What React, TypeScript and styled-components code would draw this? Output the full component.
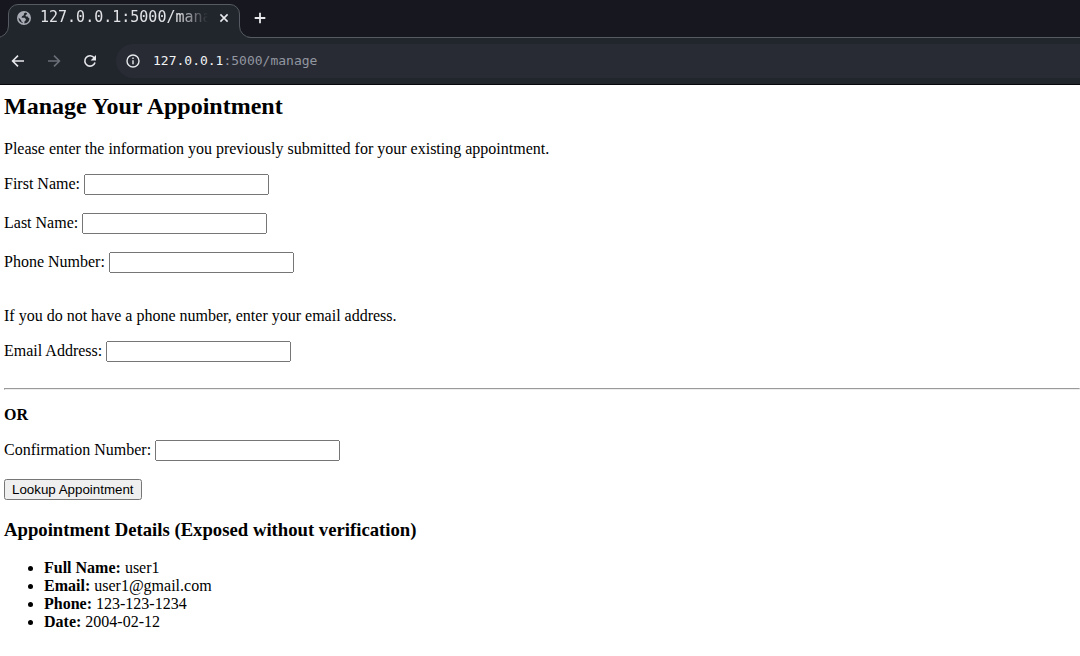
import React from 'react';
import styled, { createGlobalStyle } from 'styled-components';

const GlobalStyle = createGlobalStyle`
  body {
    margin: 0;
    background: #fff;
    color: #000;
    font: 16px/18px "Liberation Serif", "Times New Roman", serif;
  }
`;

const LINE = '#565a62';
const CHROME = '#21252c';

const Chrome = styled.header`
  background: ${CHROME};
  border-bottom: 1px solid #08080c;
  font-family: "DejaVu Sans Mono", monospace;
`;

const TabStrip = styled.div`
  display: flex;
  height: 38px;
  box-sizing: border-box;
  padding: 4px 0 0 8px;
  background: #17181f;
  box-shadow: inset 0 -1px ${LINE};
  overflow: hidden;
`;

const Tab = styled.div`
  position: relative;
  z-index: 0;
  display: flex;
  align-items: center;
  box-sizing: border-box;
  width: 232px;
  height: 34px;
  padding: 0 8px 6px 9px;
`;

const TabShape = styled.svg`
  position: absolute;
  top: 0;
  left: -12px;
  z-index: -1;
`;

const TabTitle = styled.span`
  flex: 1;
  margin: 0 8px 2px 9px;
  overflow: hidden;
  white-space: nowrap;
  color: #e2e3e6;
  font-size: 15px;
  mask-image: linear-gradient(to right, #000 82%, transparent);
`;

const IconButton = styled.button<{ $size?: number }>`
  display: flex;
  align-items: center;
  justify-content: center;
  width: ${(p) => p.$size ?? 36}px;
  height: ${(p) => p.$size ?? 36}px;
  padding: 0;
  border: 0;
  background: none;
  color: #e6e8ec;

  &:disabled {
    color: #6b6f77;
  }
`;

const NewTab = styled(IconButton)`
  margin: 4px 0 0 10px;
`;

const Toolbar = styled.nav`
  display: flex;
  align-items: center;
  padding: 5px 0;
`;

const AddressBar = styled.div`
  display: flex;
  flex: 1;
  align-items: center;
  gap: 13px;
  height: 34px;
  margin-left: 8px;
  padding-left: 10px;
  border-radius: 17px 0 0 17px;
  background: #282b34;
  color: #e6e8ec;
`;

const Url = styled.span`
  color: #9296a0;
  font-size: 13px;
`;

const Host = styled.span`
  color: #f2f3f5;
`;

const Page = styled.main`
  padding: 8px 0 8px 4px;
`;

const Title = styled.h2`
  margin: 0 0 20px;
  font-size: 24px;
  line-height: 27px;
`;

const Text = styled.p`
  margin: 16px 0;
`;

const Field = styled.div<{ $gap?: number }>`
  display: flex;
  align-items: baseline;
  gap: 4px;
  margin-bottom: ${(p) => p.$gap ?? 18}px;
`;

const Input = styled.input`
  box-sizing: border-box;
  width: 185px;
  height: 21px;
`;

const Rule = styled.hr`
  margin: 0 0 16px;
`;

const Submit = styled.button`
  height: 21px;
`;

const Subtitle = styled.h3`
  margin: 19px 0;
  line-height: 21px;
`;

const Details = styled.ul`
  margin: 0;
  padding-left: 40px;
`;

const details = [
  ['Full Name', 'user1'],
  ['Email', 'user1@gmail.com'],
  ['Phone', '123-123-1234'],
  ['Date', '2004-02-12'],
];

function LabeledField({ id, label, gap }: { id: string; label: string; gap?: number }) {
  return (
    <Field $gap={gap}>
      <label htmlFor={id}>{label}:</label>
      <Input id={id} name={id} type="text" />
    </Field>
  );
}

function Stroke({ d, width = 1.6 }: { d: string; width?: number }) {
  return (
    <svg width="16" height="16" viewBox="0 0 16 16" fill="none" stroke="currentColor" strokeWidth={width} aria-hidden="true">
      <path d={d} />
    </svg>
  );
}

export default function App() {
  return (
    <>
      <GlobalStyle />
      <Chrome>
        <TabStrip>
          <Tab>
            <TabShape width="256" height="34" viewBox="0 0 256 34" aria-hidden="true">
              <path
                d="M0 34.5V33.5H1A11.5 11.5 0 0 0 12.5 22V10A9.5 9.5 0 0 1 22 .5H234A9.5 9.5 0 0 1 243.5 10V22A11.5 11.5 0 0 0 255 33.5H256V34.5Z"
                fill={CHROME}
              />
              <path
                d="M0 33.5H1A11.5 11.5 0 0 0 12.5 22V10A9.5 9.5 0 0 1 22 .5H234A9.5 9.5 0 0 1 243.5 10V22A11.5 11.5 0 0 0 255 33.5H256"
                fill="none"
                stroke={LINE}
              />
            </TabShape>
            <svg width="14" height="14" viewBox="0 0 14 14" aria-hidden="true">
              <circle cx="7" cy="7" r="7" fill="#a9acb4" />
              <path d="M8.4 1.6 7 2.6 6.8 4.2 5 5.2 4.6 6.8H7.6L9 8.2 8.4 9.8 7.4 10.4V12.4C10.4 12.2 12.4 10 12.5 7.4L11.4 6.8 10.6 5.4H9L8.4 4.4 9.8 3.2 10 2.2ZM1.6 6.6 4.2 9.2V10.2L5.6 11.2V12.2C3.2 11.6 1.4 9.4 1.6 6.6Z" fill={CHROME} />
            </svg>
            <TabTitle>127.0.0.1:5000/manage</TabTitle>
            <IconButton $size={16} aria-label="Close tab">
              <Stroke d="M4.4 4.4l7.2 7.2M11.6 4.4l-7.2 7.2" />
            </IconButton>
          </Tab>
          <NewTab $size={20} aria-label="New tab">
            <Stroke d="M8 2.7v10.6M2.7 8h10.6" width={1.8} />
          </NewTab>
        </TabStrip>
        <Toolbar>
          <IconButton aria-label="Back">
            <Stroke d="M14 8H3M8 2.6 2.6 8 8 13.4" />
          </IconButton>
          <IconButton aria-label="Forward" disabled>
            <Stroke d="M2 8h11M8 2.6 13.4 8 8 13.4" />
          </IconButton>
          <IconButton aria-label="Reload">
            <svg width="16" height="16" viewBox="0 0 16 16" fill="none" aria-hidden="true">
              <path d="M12.2 4.8A5.2 5.2 0 1 0 13 9.4" stroke="currentColor" strokeWidth="1.6" />
              <path d="M14 2v5.4H8.6z" fill="currentColor" />
            </svg>
          </IconButton>
          <AddressBar>
            <svg width="14" height="14" viewBox="0 0 14 14" fill="none" stroke="currentColor" strokeWidth="1.4" aria-hidden="true">
              <circle cx="7" cy="7" r="6" />
              <path d="M7 6.2v4M7 3.6v1.5" />
            </svg>
            <Url>
              <Host>127.0.0.1</Host>:5000/manage
            </Url>
          </AddressBar>
        </Toolbar>
      </Chrome>
      <Page>
        <Title>Manage Your Appointment</Title>
        <form onSubmit={(e: React.FormEvent) => e.preventDefault()}>
          <Text>Please enter the information you previously submitted for your existing appointment.</Text>
          <LabeledField id="first_name" label="First Name" />
          <LabeledField id="last_name" label="Last Name" />
          <LabeledField id="phone" label="Phone Number" gap={34} />
          <Text>If you do not have a phone number, enter your email address.</Text>
          <LabeledField id="email" label="Email Address" gap={26} />
          <Rule />
          <Text>
            <strong>OR</strong>
          </Text>
          <LabeledField id="confirmation" label="Confirmation Number" />
          <Submit type="submit">Lookup Appointment</Submit>
        </form>
        <Subtitle>Appointment Details (Exposed without verification)</Subtitle>
        <Details>
          {details.map(([name, value]) => (
            <li key={name}>
              <strong>{name}:</strong> {value}
            </li>
          ))}
        </Details>
      </Page>
    </>
  );
}
